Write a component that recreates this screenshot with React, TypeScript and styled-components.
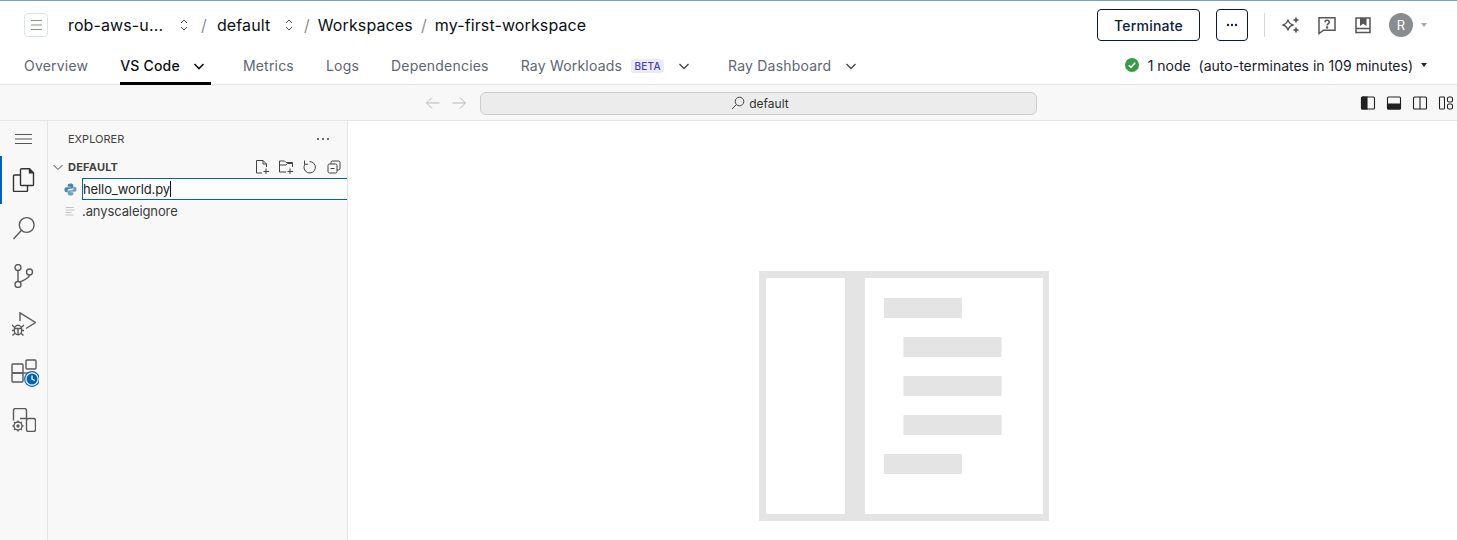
import React from "react";
import styled, { createGlobalStyle } from "styled-components";

const Global = createGlobalStyle`
  html, body { margin: 0; padding: 0; background: #fff; }
  #root { height: 540px; overflow: hidden; }
  * { box-sizing: border-box; }
`;

const Page = styled.div`
  display: flex; flex-direction: column; width: 1457px; height: 540px; overflow: hidden;
  font-family: Inter, "Liberation Sans", sans-serif; color: #0b0f14; background: #fff;
  border-top: 1px solid #7f9fc2;
`;
const Header = styled.header`display: flex; flex-direction: column; height: 84px; border-bottom: 1px solid #e6e6e6; padding: 0 24px;`;
const TopRow = styled.div`display: flex; align-items: center; height: 49px;`;
const MenuButton = styled.button`
  width: 24px; height: 24px; padding: 0; display: flex; align-items: center; justify-content: center;
  background: #fff; border: 1px solid #d9e3ef; border-radius: 4px; margin-right: 20px;
`;
const Crumbs = styled.nav`display: flex; align-items: center; font-size: 16px; font-weight: 400; letter-spacing: .12px; line-height: 20px; color: #0b0f14;`;
const Crumb = styled.span<{ $w?: number }>`display: inline-block; ${p => p.$w ? `width: ${p.$w}px;` : ""} white-space: nowrap;`;
const Sep = styled.span<{ $ml: number; $mr: number }>`color: #8b9098; margin: 0 ${p => p.$mr}px 0 ${p => p.$ml}px; font-size: 16px; font-weight: 400;`;
const Actions = styled.div`display: flex; align-items: center; margin-left: auto;`;
const Outline = styled.button<{ $w: number }>`
  width: ${p => p.$w}px; height: 32px; background: #fff; border: 1px solid #0b1a30; border-radius: 4px; color: #0d2040;
  font: 500 14px Inter, sans-serif; letter-spacing: .2px; display: flex; align-items: center; justify-content: center; padding: 0;
`;
const Divider = styled.span`width: 1px; height: 24px; background: #d4d6d9; margin: 0 16px;`;
const IconSlot = styled.span<{ $ml: number }>`display: flex; margin-left: ${p => p.$ml}px;`;
const Avatar = styled.span`
  width: 24px; height: 24px; border-radius: 50%; background: #8a8d90; color: #fff; font-size: 13px;
  display: flex; align-items: center; justify-content: center; margin-left: 16px;
`;
const Caret = styled.span<{ $c: string; $ml: number }>`
  width: 0; height: 0; border-left: 3.5px solid transparent; border-right: 3.5px solid transparent;
  border-top: 4px solid ${p => p.$c}; margin-left: ${p => p.$ml}px;
`;
const TabRow = styled.div`display: flex; align-items: stretch; height: 35px;`;
const Tab = styled.div<{ $active?: boolean; $ml: number }>`
  display: flex; align-items: center; font-size: 14px; line-height: 20px; letter-spacing: .2px; white-space: nowrap; margin-left: ${p => p.$ml}px;
  padding-top: 1px; margin-bottom: -1px;
  color: ${p => p.$active ? "#0b0f14" : "#5d6672"}; font-weight: ${p => p.$active ? 500 : 400};
  border-bottom: 3px solid ${p => p.$active ? "#000" : "transparent"};
`;
const Badge = styled.span`
  font-size: 10px; font-weight: 500; line-height: 14px; height: 14px; width: 33px; text-align: center; background: #ece9fb; color: #4a3fa8;
  border-radius: 3px; margin: 0 14px 0 9px; letter-spacing: .2px;
`;
const Status = styled.div`display: flex; align-items: center; margin-left: auto; font-size: 14px; color: #16202c; white-space: pre; padding-bottom: 3px; margin-right: 6px;`;
const StatusIcon = styled.svg`margin-right: 8px; flex: none;`;

const Toolbar = styled.div`
  display: flex; align-items: center; height: 36px; background: #f8f8f8; border-bottom: 1px solid #e5e5e5; padding: 1px 0 0 425px;
`;
const SearchBox = styled.div`
  width: 557px; height: 23px; margin-left: 13px; margin-right: 323px; background: #ececec; border: 1px solid #cdcdcd; border-radius: 6px;
  display: flex; align-items: center; justify-content: center; font-size: 12px; color: #333; gap: 4px; padding-left: 3px;
`;
const LayoutIcons = styled.div`display: flex; gap: 10px;`;

const Body = styled.div`display: flex; flex: 1; min-height: 0;`;
const Activity = styled.aside`width: 48px; background: #f8f8f8; border-right: 1px solid #e5e5e5; flex: none;`;
const ActivityHead = styled.div`height: 35px; display: flex; align-items: center; justify-content: center;`;
const ActivityItem = styled.div<{ $active?: boolean }>`
  height: 48px; display: flex; align-items: center; justify-content: center;
  border-left: 2px solid ${p => p.$active ? "#0062b8" : "transparent"}; padding-right: 1px;
`;
const Sidebar = styled.aside`width: 300px; background: #f8f8f8; border-right: 1px solid #e5e5e5; flex: none;`;
const SideTitle = styled.div`
  height: 35px; display: flex; align-items: center; justify-content: space-between; padding: 0 16px 0 20px;
  font-size: 11px; color: #424242;
`;
const Section = styled.div`height: 22px; display: flex; align-items: center; padding-left: 4px; font-size: 11px; font-weight: 700; color: #424242;`;
const SectionLabel = styled.span`margin-left: 4px; flex: 1; letter-spacing: .2px;`;
const SectionTools = styled.div`display: flex; gap: 8px; padding-right: 5px;`;
const Row = styled.div`height: 22px; display: flex; align-items: center; padding-left: 14px; font-size: 13px; letter-spacing: -.1px; color: #3b3b3b;`;
const IconBox = styled.span`width: 16px; height: 16px; margin-right: 4px; display: flex; align-items: center; justify-content: center; flex: none;`;
const RenameBox = styled.div`
  flex: 1; height: 22px; background: #fff; border: 1px solid #0062b8; border-right: none; display: flex; align-items: center;
  padding-left: 0; font-size: 13px; color: #222;
`;
const Cursor = styled.span`display: inline-block; width: 1px; height: 16px; background: #111;`;
const Editor = styled.main`flex: 1; background: #fff; display: flex; justify-content: flex-start; padding: 150px 0 0 411px;`;

const Ic = ({ s, w = s, h = s, children, c = "#424242", sw = 1.1 }: { s: number; w?: number; h?: number; children: React.ReactNode; c?: string; sw?: number }) => (
  <svg width={w} height={h} viewBox={`0 0 ${w} ${h}`} fill="none" stroke={c} strokeWidth={sw} style={{ display: "block", flex: "none" }}>{children}</svg>
);
const Updown = () => (
  <Ic s={12} h={14} c="#555" sw={1}><path d="M3 5 6 2l3 3M3 9l3 3 3-3" /></Ic>
);
const Chevron = ({ c = "#222", sw = 1.6 }: { c?: string; sw?: number }) => (
  <Ic s={12} c={c} sw={sw}><path d="M1.5 4 6 8.5 10.5 4" /></Ic>
);
const Hamburger = ({ c, w }: { c: string; w: number }) => (
  <Ic s={w} w={w} h={12} c={c} sw={1}><path d={`M0 1.5h${w}M0 6h${w}M0 10.5h${w}`} /></Ic>
);

export default function App() {
  return (
    <Page>
      <Global />
      <Header>
        <TopRow>
          <MenuButton aria-label="menu"><Hamburger c="#8b8f94" w={11} /></MenuButton>
          <Crumbs>
            <Crumb $w={110}>rob-aws-u...</Crumb>
            <Updown />
            <Sep $ml={11} $mr={10}>/</Sep>
            <Crumb $w={66}>default</Crumb>
            <Updown />
            <Sep $ml={9} $mr={8}>/</Sep>
            <Crumb>Workspaces</Crumb>
            <Sep $ml={8} $mr={8}>/</Sep>
            <Crumb>my-first-workspace</Crumb>
          </Crumbs>
          <Actions>
            <Outline $w={103}>Terminate</Outline>
            <IconSlot $ml={16} />
            <Outline $w={32} aria-label="more">
              <Ic s={12} c="#0d2040"><g fill="#0d2040" stroke="none"><circle cx="2" cy="6" r="1.2" /><circle cx="6" cy="6" r="1.2" /><circle cx="10" cy="6" r="1.2" /></g></Ic>
            </Outline>
            <Divider />
            <IconSlot $ml={0}>
              <Ic s={20} c="#555" sw={1.3}>
                <path d="M7 4.500C7.600 8 8.800 9.300 12.500 10 8.800 10.700 7.600 12 7 15.500 6.400 12 5.200 10.700 1.500 10 5.200 9.300 6.400 8 7 4.500Z" />
                <path fill="#555" stroke="none" d="M15 1.500l1 2.500 2.500 1-2.500 1-1 2.500-1-2.500-2.500-1 2.500-1zM15 11.500l1 2.500 2.500 1-2.500 1-1 2.500-1-2.500-2.500-1 2.500-1z" />
              </Ic>
            </IconSlot>
            <IconSlot $ml={16}>
              <Ic s={20} c="#555" sw={1.5}>
                <path d="M2 2.800h16v12.400H6.500L2 18.500z" />
                <path d="M8 7.200c.1-2.600 4.200-2.600 4.200 0 0 1.700-2.100 1.700-2.100 3.300" />
                <circle cx="10.100" cy="12.600" r=".5" fill="#555" />
              </Ic>
            </IconSlot>
            <IconSlot $ml={16}>
              <Ic s={20} c="#555" sw={1.5}>
                <path d="M3 3h14v14.500H3zM3 13.500h14" />
                <path fill="#555" stroke="none" d="M7 3h6.500v8l-3.200-2.200L7 11z" />
              </Ic>
            </IconSlot>
            <Avatar>R</Avatar>
            <Caret $c="#a9a9a9" $ml={8} />
            <IconSlot $ml={6} />
          </Actions>
        </TopRow>
        <TabRow>
          <Tab $ml={0}>Overview</Tab>
          <Tab $ml={32} $active>VS Code<IconSlot $ml={13}><Chevron c="#111" /></IconSlot><IconSlot $ml={6} /></Tab>
          <Tab $ml={32}>Metrics</Tab>
          <Tab $ml={32}>Logs</Tab>
          <Tab $ml={32}>Dependencies</Tab>
          <Tab $ml={32}>Ray Workloads<Badge>BETA</Badge><Chevron c="#444" sw={1.3} /></Tab>
          <Tab $ml={38}>Ray Dashboard<IconSlot $ml={14}><Chevron c="#444" sw={1.3} /></IconSlot></Tab>
          <Status>
            <StatusIcon width="16" height="16" viewBox="0 0 16 16">
              <circle cx="8" cy="8" r="7" fill="#3a9b46" />
              <path d="M4.800 8.200 7 10.400l4.200-4.600" fill="none" stroke="#fff" strokeWidth="1.600" />
            </StatusIcon>
            {"1 node  (auto-terminates in 109 minutes)"}
            <Caret $c="#1b2a44" $ml={8} />
          </Status>
        </TabRow>
      </Header>
      <Toolbar>
        <Ic s={16} c="#b9b9b9" sw={1}><path d="M14.500 8H1.500M7 2.500 1.500 8 7 13.500" /></Ic>
        <IconSlot $ml={10}><Ic s={16} c="#b9b9b9" sw={1}><path d="M1.500 8h13M9 2.500 14.500 8 9 13.500" /></Ic></IconSlot>
        <SearchBox>
          <Ic s={14} c="#444" sw={1}><circle cx="8.500" cy="5.500" r="4.300" /><path d="M5.400 8.600 1 13" /></Ic>
          default
        </SearchBox>
        <LayoutIcons>
          <Ic s={16}><rect x="1.500" y="2" width="13" height="12" rx="1" stroke="#222" /><path d="M1.500 3a1 1 0 0 1 1-1H7v12H2.500a1 1 0 0 1-1-1z" fill="#222" stroke="#222" /></Ic>
          <Ic s={16}><rect x="1.500" y="2" width="13" height="12" rx="1" stroke="#222" /><path d="M1.500 9h13v4a1 1 0 0 1-1 1h-11a1 1 0 0 1-1-1z" fill="#222" stroke="#222" /></Ic>
          <Ic s={16}><rect x="1.500" y="2" width="13" height="12" rx="1" stroke="#222" /><path d="M8 2v12" stroke="#222" /></Ic>
          <Ic s={16}><g stroke="#222"><rect x="1.500" y="2" width="5" height="12" rx=".8" /><rect x="9.500" y="2" width="5" height="5" rx="1.500" /><rect x="9.500" y="9" width="5" height="5" rx="1.500" /></g></Ic>
        </LayoutIcons>
      </Toolbar>
      <Body>
        <Activity>
          <ActivityHead><Hamburger c="#555" w={17} /></ActivityHead>
          <ActivityItem $active>
            <Ic s={24} c="#333" sw={1.4}>
              <path d="M9.500 .7h8l4 4v11.800a1 1 0 0 1-1 1h-11a1 1 0 0 1-1-1V1.700a1 1 0 0 1 1-1z" />
              <path d="M8.500 7H2.500a1 1 0 0 0-1 1v14.500a1 1 0 0 0 1 1h12a1 1 0 0 0 1-1V17.500" />
              <path d="M17.500 .7v4h4" fill="#333" />
            </Ic>
          </ActivityItem>
          <ActivityItem>
            <Ic s={24} c="#5a5a5a" sw={1.4}><circle cx="14.700" cy="9" r="7.400" /><path d="M9.500 14.200 1.500 23" /></Ic>
          </ActivityItem>
          <ActivityItem>
            <Ic s={24} c="#5a5a5a" sw={1.4}>
              <circle cx="6" cy="3.500" r="3" /><circle cx="6" cy="20.500" r="3" /><circle cx="17.500" cy="8" r="3" />
              <path d="M6 6.500v11M17.500 11c0 3.500-6 5-9.500 7" />
            </Ic>
          </ActivityItem>
          <ActivityItem>
            <Ic s={24} c="#5a5a5a" sw={1.4}>
              <path d="M8 9V.8L23.500 10.500 14 16.500" />
              <ellipse cx="6" cy="18" rx="3.800" ry="4.800" />
              <path d="M2.200 16.500h7.600M6 16.500v6.300M0 13l2.800 2.500M12 13l-2.800 2.500M0 18.500h2.200M12 18.500H9.800M.5 23.500l2.400-2.300M11.500 23.500l-2.400-2.300" />
            </Ic>
          </ActivityItem>
          <ActivityItem>
            <Ic s={30} c="#5a5a5a" sw={1.4}>
              <rect x="3" y="7" width="11" height="9" rx="1" /><rect x="3" y="16" width="11" height="9" rx="1" /><path d="M14 16h5" />
              <rect x="17" y="3" width="10" height="9" rx="1" />
              <circle cx="23" cy="22" r="7.300" fill="#fff" stroke="#0062b8" strokeWidth="1.200" />
              <circle cx="23" cy="22" r="5.500" fill="#0062b8" stroke="none" />
              <path d="M23 18.500V22l2.800 1.500" stroke="#fff" strokeWidth="1.300" />
            </Ic>
          </ActivityItem>
          <ActivityItem>
            <Ic s={24} c="#5a5a5a" sw={1.4}>
              <path d="M1.500 12.500V2.500a2 2 0 0 1 2-2h9a2 2 0 0 1 2 2v8H8" />
              <rect x="14.500" y="10.500" width="9" height="13" rx="2" />
              <circle cx="6" cy="18" r="4" /><circle cx="6" cy="18" r="1" fill="#5a5a5a" />
              <path d="M6 12.500V14M6 22v1.500M.5 18H2M10 18h1.500M2.100 14.100l1 1M9.900 14.100l-1 1M2.100 21.900l1-1M9.900 21.900l-1-1" />
            </Ic>
          </ActivityItem>
        </Activity>
        <Sidebar>
          <SideTitle>
            EXPLORER
            <Ic s={16} c="#424242"><g fill="#424242" stroke="none"><circle cx="3" cy="8" r="1" /><circle cx="8" cy="8" r="1" /><circle cx="13" cy="8" r="1" /></g></Ic>
          </SideTitle>
          <Section>
            <Ic s={12} c="#424242" sw={1}><path d="M1.500 4 6 8.500 10.500 4" /></Ic>
            <SectionLabel>DEFAULT</SectionLabel>
            <SectionTools>
              <Ic s={16} c="#424242" sw={1}><path d="M8 14H2.500V1.500h6.500l3.500 3.500V8M9 1.500V5h3.500M12 9.500v5.500M9.500 12.500h5.500" /></Ic>
              <Ic s={16} c="#424242" sw={1}><path d="M8 13H1.500V2h5l1.500 1.500h6.500V8M1.500 6h6.500L9.500 4.500h5M12 9.500v5.500M9.500 12.500h5.500" /></Ic>
              <Ic s={16} c="#424242" sw={1}><path d="M7.500 2.600A5.700 5.700 0 1 1 2.900 5.200M2.500 1.500v3.700h3.700" /></Ic>
              <Ic s={16} c="#424242" sw={1}><rect x="5" y="2" width="9" height="9" rx="1.500" /><rect x="2" y="5" width="9" height="9" rx="1.500" fill="#f8f8f8" /><path d="M4.500 9.500h4" /></Ic>
            </SectionTools>
          </Section>
          <Row>
            <IconBox>
              <svg width="13" height="13" viewBox="0 0 14 14">
                <path d="M7 .5c-2.600 0-3 1-3 2V4h3.200v.6H2.500C1 4.600.5 5.800.5 7.200s.5 2.700 2 2.700H4V8.200c0-1.200 1-2 2.200-2h2c1 0 1.800-.8 1.800-1.800v-2C10 1 8.800.5 7 .5z" fill="#4b87ab" />
                <path d="M7 13.500c2.600 0 3-1 3-2V10H6.800v-.6h4.700c1.500 0 2-1.200 2-2.600s-.5-2.700-2-2.700H10v1.700c0 1.200-1 2-2.200 2h-2c-1 0-1.800.8-1.800 1.800v2c0 1.400 1.200 1.900 3 1.900z" fill="#6ea3bf" />
              </svg>
            </IconBox>
            <RenameBox>hello_world.py<Cursor /></RenameBox>
          </Row>
          <Row>
            <IconBox>
              <Ic s={12} c="#c4c4c4" sw={1}><path d="M1.500 2.500h8M1.500 5h9M1.500 7.500h6M1.500 10h8" /></Ic>
            </IconBox>
            .anyscaleignore
          </Row>
        </Sidebar>
        <Editor>
          <svg width="290" height="250" viewBox="0 0 290 250" style={{ display: "block", flex: "none" }}>
            <path fill="#e4e4e4" fillRule="evenodd" d="M0 0h290v250H0zM7 7v236h79V7zM106 7v236h178V7z" />
            <g fill="#e4e4e4">
              <rect x="125" y="27" width="78" height="20" />
              <rect x="144.500" y="66" width="98" height="20" />
              <rect x="144.500" y="105" width="98" height="20" />
              <rect x="144.500" y="144" width="98" height="20" />
              <rect x="125" y="183" width="78" height="20" />
            </g>
          </svg>
        </Editor>
      </Body>
    </Page>
  );
}
